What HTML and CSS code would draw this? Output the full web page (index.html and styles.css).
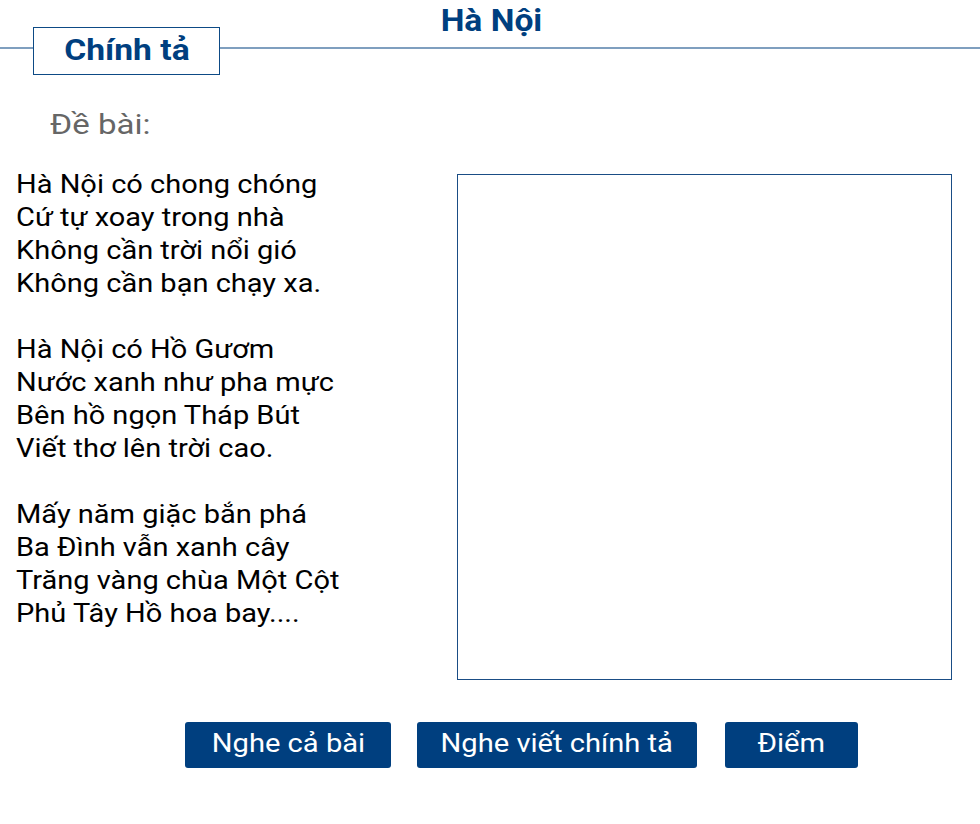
FILE: index.html
```html
<!DOCTYPE html>
<html lang="vi">
<head>
<meta charset="utf-8">
<title>Chính tả - Hà Nội</title>
<link rel="stylesheet" href="styles.css">
</head>
<body>
<header class="header">
  <h1 class="title">Hà Nội</h1>
  <div class="tab-row">
    <span class="rule rule-left"></span>
    <div class="tab"><span class="wide">Chính tả</span></div>
    <span class="rule rule-right"></span>
  </div>
</header>
<h2 class="prompt"><span class="prompt-text">Đề bài:</span></h2>
<main class="content">
  <div class="poem-col">
    <div class="poem">
      <p>Hà Nội có chong chóng<br>Cứ tự xoay trong nhà<br>Không cần trời nổi gió<br>Không cần bạn chạy xa.</p>
      <p>Hà Nội có Hồ Gươm<br>Nước xanh như pha mực<br>Bên hồ ngọn Tháp Bút<br>Viết thơ lên trời cao.</p>
      <p>Mấy năm giặc bắn phá<br>Ba Đình vẫn xanh cây<br>Trăng vàng chùa Một Cột<br>Phủ Tây Hồ hoa bay....</p>
    </div>
  </div>
  <textarea class="answer"></textarea>
</main>
<div class="actions">
  <button class="btn btn-listen"><span class="wide">Nghe cả bài</span></button>
  <button class="btn btn-dictate"><span class="wide">Nghe viết chính tả</span></button>
  <button class="btn btn-score"><span class="wide">Điểm</span></button>
</div>
</body>
</html>
```
FILE: styles.css
```css
html, body {
  margin: 0;
  padding: 0;
  background: #fff;
  font-family: Roboto, "Noto Sans", sans-serif;
  overflow: hidden;
}
.wide {
  display: inline-block;
  transform: scaleX(1.12);
  transform-origin: center;
}
.header {
  display: grid;
  height: 75px;
}
.title, .tab-row {
  grid-area: 1 / 1;
}
.title {
  justify-self: center;
  align-self: start;
  margin: 0;
  padding-left: 2px;
  font-size: 32px;
  line-height: 40px;
  font-weight: 700;
  color: #003f7f;
  transform: scaleX(1.05);
  position: relative;
  z-index: 1;
}
.tab-row {
  display: flex;
  align-items: flex-start;
  margin-top: 27px;
}
.rule {
  height: 2px;
  margin-top: 20px;
  background: #7f9fbf;
}
.rule-left { width: 33px; }
.rule-right { flex: 1; }
.tab {
  width: 185px;
  height: 46px;
  border: 1px solid #0d4a85;
  background: #fff;
  color: #003f7f;
  font-size: 30px;
  font-weight: 700;
  line-height: 44px;
  text-align: center;
  box-sizing: content-box;
}
.prompt {
  margin: 30px 0 0 50px;
  font-size: 28px;
  font-weight: 400;
  line-height: 40px;
  color: #666;
}
.prompt-text {
  display: inline-block;
  transform: scaleX(1.18);
  transform-origin: left center;
}
.content {
  display: flex;
  align-items: flex-start;
  margin-top: 29px;
}
.poem-col {
  flex: 0 0 457px;
  padding-left: 16px;
  box-sizing: border-box;
}
.poem {
  display: inline-block;
  font-size: 25px;
  line-height: 33px;
  color: #000;
  margin-top: -6px;
  transform: scaleX(1.16);
  transform-origin: left top;
}
.poem p {
  margin: 0 0 33px 0;
}
.answer {
  flex: 0 0 495px;
  height: 506px;
  box-sizing: border-box;
  border: 1px solid #1a4d85;
  margin: 0;
  resize: none;
  outline: none;
  font-family: inherit;
}
.actions {
  display: flex;
  margin-top: 42px;
  padding-left: 185px;
}
.btn {
  height: 46px;
  border: none;
  border-radius: 3px;
  background: #003f7f;
  color: #fff;
  font-family: inherit;
  font-size: 26px;
  padding: 0 0 5px;
  margin: 0;
}
.btn-listen { width: 206px; margin-right: 26px; }
.btn-dictate { width: 280px; margin-right: 28px; }
.btn-score { width: 133px; }
```
